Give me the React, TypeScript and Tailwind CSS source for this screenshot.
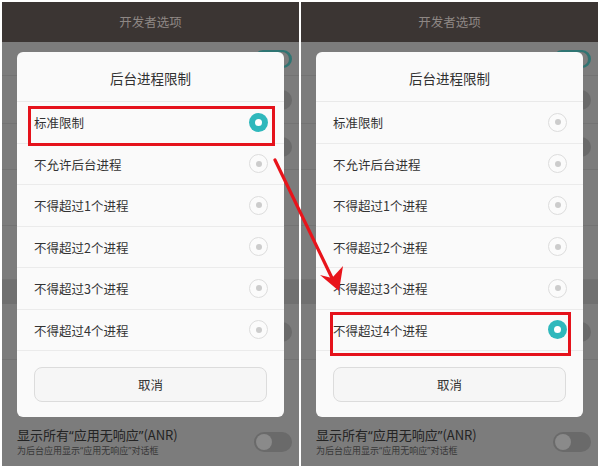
const OPTIONS = [
  '标准限制',
  '不允许后台进程',
  '不得超过1个进程',
  '不得超过2个进程',
  '不得超过3个进程',
  '不得超过4个进程',
]

const FONT = { fontFamily: '"Noto Sans CJK SC", "Noto Sans", sans-serif' }

function Radio({ on }: { on: boolean }) {
  if (on) {
    return (
      <span className="flex h-[19px] w-[19px] items-center justify-center rounded-full bg-[#2fb8bc]">
        <span className="h-[7px] w-[7px] rounded-full bg-white" />
      </span>
    )
  }
  return (
    <span className="flex h-[19px] w-[19px] items-center justify-center rounded-full border border-[#dddddd] bg-[#fbfbfb]">
      <span className="h-[6px] w-[6px] rounded-full bg-[#cccccc]" />
    </span>
  )
}

function BgToggle({ on }: { on?: boolean }) {
  return on ? (
    <span className="flex h-[18px] w-[38px] items-center justify-end rounded-full border-2 border-[#2f7573] bg-[#3d6f6d] px-[1px]">
      <span className="h-[14px] w-[14px] rounded-full bg-[#7d7d7d]" />
    </span>
  ) : (
    <span className="flex h-[20px] w-[38px] items-center rounded-full bg-[#6a6a6a] px-[2px]">
      <span className="h-[16px] w-[16px] rounded-full bg-[#8a8a8a]" />
    </span>
  )
}

function BgRow({ h, toggle, on }: { h: string; toggle?: boolean; on?: boolean }) {
  return (
    <div className={`flex ${h} items-center justify-end border-b border-[#737373] pr-[7px]`}>
      {toggle && <BgToggle on={on} />}
    </div>
  )
}

// narrow curly quotes, as on the phone
function Q({ c }: { c: string }) {
  return <span className="font-['Noto_Sans']">{c}</span>
}

function Panel({ selected, box }: { selected: number; box: string }) {
  return (
    <div className="flex h-full w-[297px] flex-col">
      <div className="flex h-[40px] items-center justify-center bg-[#3b3533] pt-[1px] text-[12.5px] text-[#8e8784]">
        开发者选项
      </div>
      <div className="relative flex flex-1 flex-col bg-[#7c7c7c]">
        <BgRow h="h-[34px]" toggle on />
        <BgRow h="h-[48px]" toggle />
        <BgRow h="h-[46px]" toggle />
        <BgRow h="h-[56px]" />
        <BgRow h="h-[54px]" />
        <div className="h-[24px] bg-[#707070]" />
        <BgRow h="h-[56px]" toggle />
        <div className="flex-1" />
        <div className="flex h-[48px] items-center justify-between pl-[15px] pr-[7px]">
          <div className="flex flex-col">
            <span className="text-[13px] leading-[18px] text-[#232323]">
              显示所有<Q c="“" />应用无响应<Q c="”" />(ANR)
            </span>
            <span className="text-[9px] leading-[14px] text-[#383838]">
              为后台应用显示<Q c="“" />应用无响应<Q c="”" />对话框
            </span>
          </div>
          <BgToggle />
        </div>

        <div className="absolute left-[15px] right-[15px] top-[10px] rounded-[6px] bg-[#fafafa]">
          <div className="flex h-[50px] items-center justify-center border-b border-[#e9e9e9] pt-[4px] text-[13.5px] text-[#303030]">
            后台进程限制
          </div>
          {OPTIONS.map((label, i) => (
            <div
              key={label}
              className="flex h-[41.5px] items-center justify-between border-b border-[#ebebeb] pl-[17px] pr-[16px] text-[12.5px] text-[#333333]"
            >
              <span className="pt-[3px]">{label}</span>
              <Radio on={i === selected} />
            </div>
          ))}
          <div className="px-[17px] pb-[15px] pt-[16px]">
            <div className="flex h-[35px] items-center justify-center rounded-[8px] border border-[#dcdcdc] bg-[#f6f6f6] pt-[2px] text-[12.5px] text-[#333333]">
              取消
            </div>
          </div>
          <div className={`pointer-events-none absolute border-[3px] border-[#e5121b] ${box}`} />
        </div>
      </div>
    </div>
  )
}

export default function App() {
  return (
    <div className="relative flex h-[472px] w-[600px] gap-[2px] bg-white p-[2px] pb-[6px]" style={FONT}>
      <Panel selected={0} box="left-[11px] top-[54px] h-[40px] w-[247px]" />
      <Panel selected={5} box="left-[14px] top-[260px] h-[44px] w-[241px]" />
      <svg className="pointer-events-none absolute left-0 top-0" width="600" height="472" viewBox="0 0 600 472">
        <line x1="275" y1="160" x2="332" y2="278" stroke="#e8141b" strokeWidth="3.2" strokeLinecap="round" />
        <polygon points="339,291 320,275 332,278 343,266" fill="#e8141b" />
      </svg>
    </div>
  )
}
